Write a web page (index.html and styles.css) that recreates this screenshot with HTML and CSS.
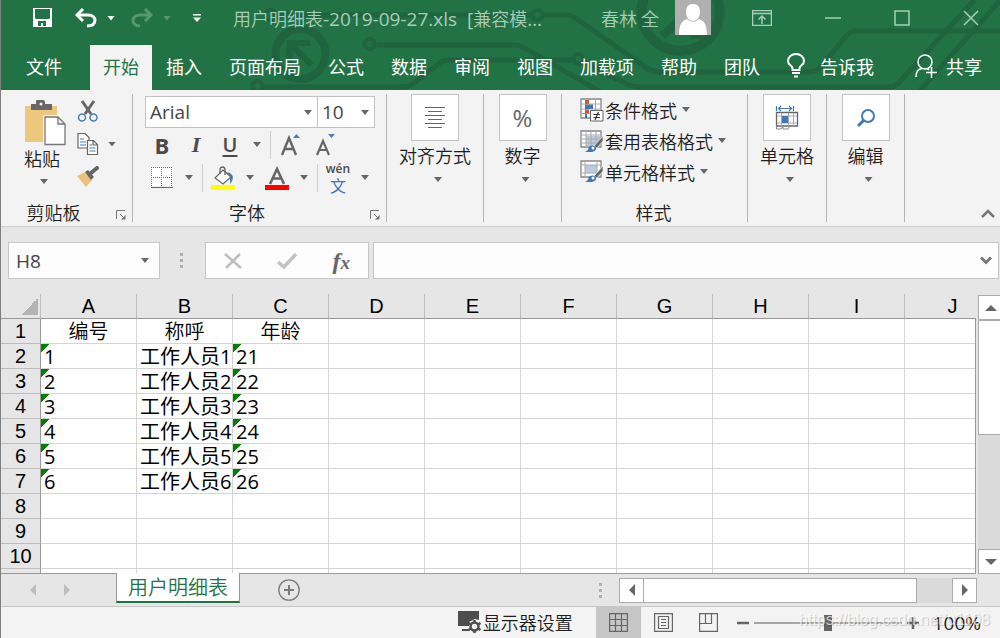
FILE: index.html
```html
<!DOCTYPE html>
<html lang="zh-CN">
<head>
<meta charset="utf-8">
<title>用户明细表-2019-09-27.xls</title>
<link rel="stylesheet" href="styles.css">
</head>
<body>
<div class="app">
  <header class="header">
    <svg class="circuit" viewBox="0 0 1000 90" preserveAspectRatio="xMidYMin slice" fill="none" stroke="#20633f" stroke-width="5" aria-hidden="true">
      <circle cx="300" cy="54" r="25" stroke-width="8"/>
      <path d="M310 43H289V63M290 44L311 65" stroke-width="6"/>
      <circle cx="270" cy="15" r="5" stroke-width="4"/>
      <path d="M276 15H531M544 15H567Q571 15 575 18L642 65Q650 72 660 72H810Q816 72 820 67L846 36Q850 31 856 31H1000"/>
      <circle cx="537" cy="15" r="5" stroke-width="4"/>
      <circle cx="369" cy="44" r="5" stroke-width="4"/>
      <path d="M376 45H514Q519 45 524 48L600 92"/>
      <circle cx="257" cy="86" r="5" stroke-width="4"/>
      <path d="M264 87H402Q408 87 412 84L438 64Q442 60 448 60H571"/>
      <circle cx="578" cy="59" r="5" stroke-width="4"/>
      <path d="M583 62L622 82Q630 87 640 87H888Q894 87 898 83L974 0M918 92L1002 -2"/>
      <circle cx="680" cy="12" r="39" stroke-width="10"/>
      <path d="M662 36L694 6M690 35H702" stroke-width="8"/>
    </svg>
    <div class="titlebar">
      <div class="quick">
        <button class="plain save" aria-label="保存"><svg width="20" height="20" viewBox="0 0 20 20"><path d="M0 0H19V19H0ZM2 1V10L3 11H16L17 10V1ZM5 13V18H8V15H10V18H13V13Z" fill="#fff" fill-rule="evenodd"/></svg></button>
        <div class="pair">
          <button class="plain" aria-label="撤消"><svg width="22" height="20" viewBox="0 0 22 20" fill="none" stroke="#fff" stroke-width="3"><path d="M8 1L2 7L8 13" /><path d="M2 7H13C18 7 20 10 20 12C20 16 17 18 12 18"/></svg></button>
          <button class="plain" aria-label="撤消选项"><i class="caret white"></i></button>
        </div>
        <div class="pair dim">
          <button class="plain" aria-label="恢复"><svg width="22" height="20" viewBox="0 0 22 20" fill="none" stroke="#fff" stroke-width="3"><path d="M14 1L20 7L14 13" /><path d="M20 7H9C4 7 2 10 2 12C2 16 5 18 9 18"/></svg></button>
          <button class="plain" aria-label="恢复选项"><i class="caret white"></i></button>
        </div>
        <button class="plain custom" aria-label="自定义"><svg width="8" height="8" viewBox="0 0 8 8" fill="#fff"><path d="M0 0H8V1.500H0ZM0 3.500H8L4 8Z"/></svg></button>
      </div>
      <h1 class="title">用户明细表<span class="latin">-2019-09-27.xls&nbsp; [</span>兼容模<span class="latin">...</span></h1>
      <span class="user">春林 全</span>
      <svg class="avatar" width="36" height="35" viewBox="0 0 36 35"><path d="M0 0H36V35H0Z" fill="#b0b0b0"/><path d="M18 4C23 4 25 7 25 12C25 17 22 21 18 21C14 21 11 17 11 12C11 7 13 4 18 4ZM4 35C4 26 6 21 12 19Q18 25 24 19C30 21 32 26 32 35Z" fill="#fff"/></svg>
      <div class="window">
        <button class="plain" aria-label="功能区显示选项"><svg width="20" height="16" viewBox="0 0 20 16" fill="none" stroke="#a9cdb8"><path d="M.5.5H19.500V15.500H.5ZM0 3.500H20" stroke-width="1.500"/><path d="M10 14V6M6.500 9.500L10 6L13.500 9.500" stroke-width="1.500"/></svg></button>
        <button class="plain" aria-label="最小化"><svg width="16" height="16" viewBox="0 0 16 16"><path d="M0 8H16" stroke="#a9cdb8" stroke-width="1.500"/></svg></button>
        <button class="plain" aria-label="最大化"><svg width="16" height="16" viewBox="0 0 16 16"><path d="M1 1H15V15H1Z" fill="none" stroke="#a9cdb8" stroke-width="1.500"/></svg></button>
        <button class="plain" aria-label="关闭"><svg width="16" height="16" viewBox="0 0 16 16"><path d="M1 1L15 15M15 1L1 15" stroke="#a9cdb8" stroke-width="1.500"/></svg></button>
      </div>
    </div>
    <nav class="tabs">
      <button class="tab file">文件</button>
      <button class="tab active">开始</button>
      <button class="tab">插入</button>
      <button class="tab">页面布局</button>
      <button class="tab">公式</button>
      <button class="tab">数据</button>
      <button class="tab">审阅</button>
      <button class="tab">视图</button>
      <button class="tab">加载项</button>
      <button class="tab">帮助</button>
      <button class="tab">团队</button>
      <button class="tab tell"><svg width="18" height="25" viewBox="0 0 18 25" fill="none" stroke="#fff" stroke-width="2"><path d="M5.500 17V15C5 12 1 12 1 8C1 4 4.500 1 9 1S17 4 17 8C17 12 13 12 12.500 15V17ZM5 20H13M7 23.500H11"/></svg>告诉我</button>
      <button class="tab share"><svg width="22" height="24" viewBox="0 0 22 24" fill="none" stroke="#fff" stroke-width="1.500"><circle cx="10" cy="8" r="7"/><path d="M1 23C1 18 3 15 7 14.500M12 14.500L14 16M16.500 13V24M11 18.500H22"/></svg>共享</button>
    </nav>
  </header>

  <section class="ribbon" aria-label="开始">
    <div class="group clipboard">
      <div class="clip-body">
        <button class="plain paste">
          <svg width="42" height="46" viewBox="0 0 42 46"><path d="M1 6H33V42H1Z" fill="#eec77e"/><path d="M7 10V4H12V1Q12 0 13 0H19Q21 0 21 2V4H28V10Z" fill="#686868"/><circle cx="17" cy="4" r="1.500" fill="#f3f3f3"/><path d="M19 15H36L43 22V46H19Z" fill="#f3f3f3"/><path d="M21 17H34L41 24V44.500H21ZM34 17V24H41" fill="#fff" stroke="#777" stroke-width="1.300"/></svg>
          <span>粘贴</span><i class="caret"></i>
        </button>
        <div class="clip-tools">
          <button class="plain" aria-label="剪切"><svg width="22" height="22" viewBox="0 0 22 22" fill="none"><path d="M5 1L14 14M17 1L8 14" stroke="#666" stroke-width="3"/><circle cx="5" cy="17.500" r="3.500" stroke="#4a7fb5" stroke-width="1.500"/><circle cx="16.500" cy="17.500" r="3.500" stroke="#4a7fb5" stroke-width="1.500"/></svg></button>
          <div class="copy"><button class="plain" aria-label="复制"><svg width="22" height="22" viewBox="0 0 22 22" fill="#fff" stroke="#666" stroke-width="1.200"><path d="M1 .5H8L12 4.500V15H1Z"/><path d="M3 6H7M3 9H9M3 12H9" stroke="#4a7fb5"/><path d="M10.500 7.500H16.500L20.500 11.500V21.500H10.500ZM16 7.500V12H20.500"/><path d="M12.500 12H15M12.500 15H18.500M12.500 18H18.500" stroke="#4a7fb5"/></svg></button><button class="plain" aria-label="复制选项"><i class="caret"></i></button></div>
          <button class="plain" aria-label="格式刷"><svg width="22" height="21" viewBox="0 0 22 21"><path d="M0 10L8 6L15 14L9 21Z" fill="#eec17b"/><path d="M8 6L11 4L17 11L14 14Z" fill="#666"/><path d="M14 7L20 2" stroke="#666" stroke-width="4" stroke-linecap="round"/></svg></button>
        </div>
      </div>
      <div class="caption"><span>剪贴板</span><button class="plain launcher" aria-label="剪贴板设置"><svg width="10" height="10" viewBox="0 0 10 10" fill="none" stroke="#777"><path d="M.5 9V.5H9M4 4L8 8"/><path d="M9.500 5V9.500H5Z" fill="#777" stroke="none"/></svg></button></div>
    </div>

    <div class="group font">
      <div class="combos">
        <span class="combo family"><select aria-label="字体"><option>Arial</option></select><i class="caret"></i></span>
        <span class="combo size"><select aria-label="字号"><option>10</option></select><i class="caret"></i></span>
      </div>
      <div class="tools">
        <button class="tool bold">B</button><button class="tool italic">I</button><button class="tool under">U</button><button class="tool drop" aria-label="下划线选项"><i class="caret"></i></button>
        <i class="bar"></i>
        <button class="tool" aria-label="增大字号"><svg width="22" height="24" viewBox="0 0 22 24"><path d="M2 22L9 5L16 22M5 16H13" fill="none" stroke="#666" stroke-width="2.400"/><path d="M13 5H20L16.500 1Z" fill="#4a7fb5"/></svg></button>
        <button class="tool" aria-label="减小字号"><svg width="22" height="24" viewBox="0 0 22 24"><path d="M3 22L9 8L15 22M5 17H13" fill="none" stroke="#666" stroke-width="2.200"/><path d="M14 1H21L17.500 5Z" fill="#4a7fb5"/></svg></button>
      </div>
      <div class="tools">
        <button class="tool" aria-label="边框"><svg width="22" height="22" viewBox="0 0 22 22" fill="none" stroke="#666"><path d="M0 0H22V22H0Z" fill="#fff" stroke="none"/><path d="M0 .5H21M0 10.500H21M.5 0V21M10.500 0V21M20.500 0V21" stroke-dasharray="1 1" shape-rendering="crispEdges"/><path d="M0 20.500H22" stroke-width="1.200"/></svg></button><button class="tool drop" aria-label="边框选项"><i class="caret"></i></button>
        <i class="bar"></i>
        <button class="tool" aria-label="填充颜色"><svg width="24" height="24" viewBox="0 0 24 24"><path d="M0 19H24V24H0Z" fill="#ff0"/><path d="M16 6Q21 7 22 11Q22 15 19 18V11Z" fill="#4a7fb5"/><path d="M12 4L20 11L12 18L4 12Z" fill="#fff" stroke="#666" stroke-width="1.200"/><path d="M9 8V4Q9 1 11.500 1T14 4V9" fill="none" stroke="#666" stroke-width="1.300"/></svg></button><button class="tool drop" aria-label="填充颜色选项"><i class="caret"></i></button>
        <button class="tool" aria-label="字体颜色"><svg width="24" height="24" viewBox="0 0 24 24"><path d="M0 19H24V24H0Z" fill="red"/><path d="M5 18L12 3L19 18M8 12.500H16" fill="none" stroke="#666" stroke-width="2.600"/></svg></button><button class="tool drop" aria-label="字体颜色选项"><i class="caret"></i></button>
        <i class="bar"></i>
        <button class="tool phonetic"><span>wén</span><b>文</b></button><button class="tool drop" aria-label="拼音选项"><i class="caret"></i></button>
      </div>
      <div class="caption"><span>字体</span><button class="plain launcher" aria-label="字体设置"><svg width="10" height="10" viewBox="0 0 10 10" fill="none" stroke="#777"><path d="M.5 9V.5H9M4 4L8 8"/><path d="M9.500 5V9.500H5Z" fill="#777" stroke="none"/></svg></button></div>
    </div>

    <div class="group align"><button class="plain big"><span class="tile"><svg width="20" height="22" viewBox="0 0 20 22" stroke="#666" shape-rendering="crispEdges"><path d="M0 .5H20M3 4.500H17M0 8.500H20M3 12.500H17M0 16.500H20M3 20.500H17"/></svg></span>对齐方式<i class="caret"></i></button></div>
    <div class="group number"><button class="plain big"><span class="tile percent">%</span>数字<i class="caret"></i></button></div>

    <div class="group styles">
      <button class="plain line"><svg width="24" height="24" viewBox="0 0 24 24"><path d="M1 1H21V20H1Z" fill="#fff" stroke="#888" stroke-width="1.300"/><path d="M5.500 1V20M15.500 1V20M1 6H21M1 11H21M1 15.500H21" stroke="#aaa"/><path d="M5 2H9V6H5ZM5 11.500H9V15.500H5Z" fill="#d9532c"/><path d="M5 6.500H13V11H5ZM5 16H7V20H5Z" fill="#3f78b4"/><path d="M10.500 12.500H23V23H10.500Z" fill="#fff" stroke="#666"/><path d="M13.500 16.500H20M13.500 19.500H20M18.500 14L15 22" stroke="#333" stroke-width="1.200"/></svg>条件格式<i class="caret"></i></button>
      <button class="plain line"><svg width="24" height="24" viewBox="0 0 24 24"><path d="M1 2H21V18H1Z" fill="#fff" stroke="#888" stroke-width="1.300"/><path d="M6 7H20V17H6Z" fill="#b9cbe0"/><path d="M6 2V18M11 2V18M16 2V18M1 6H21M1 10H21M1 14H21" stroke="#aaa"/><path d="M14 17L23 7V12L17 19Z" fill="#666" stroke="#f3f3f3" stroke-width=".7"/><path d="M5 23Q8 22 9 18Q12 15 16 18Q17 22 12 23Z" fill="#3f78b4"/><circle cx="13" cy="19" r="1.500" fill="#fff"/></svg>套用表格格式<i class="caret"></i></button>
      <button class="plain line"><svg width="24" height="24" viewBox="0 0 24 24"><path d="M1 1H21V17H1Z" fill="#fff" stroke="#888" stroke-width="1.300"/><path d="M5 5H17V13H5Z" fill="#b9cbe0"/><path d="M5 1V17M17 1V17M1 5H21M1 13H21" stroke="#aaa"/><path d="M14 16L23 6V11L17 18Z" fill="#666" stroke="#f3f3f3" stroke-width=".7"/><path d="M5 22Q8 21 9 17Q12 14 16 17Q17 21 12 22Z" fill="#3f78b4"/><circle cx="13" cy="18" r="1.500" fill="#fff"/></svg>单元格样式<i class="caret"></i></button>
      <div class="caption"><span>样式</span></div>
    </div>

    <div class="group cells"><button class="plain big"><span class="tile"><svg width="24" height="26" viewBox="0 0 24 26" fill="none"><path d="M1.500 1V6M18.500 1V6M3 3.500H17M6 1L3.500 3.500L6 6M14 1L16.500 3.500L14 6" stroke="#3f78b4" stroke-width="1.200"/><path d="M1.500 7.500H22.500V21H1.500Z" stroke="#666" stroke-width="1.300"/><path d="M6.500 8V21M13.500 8V21M18.500 8V21M2 11H22M2 18H22" stroke="#aaa"/><path d="M7 11H13V18H7Z" fill="#3f78b4"/><path d="M1.500 21V24H6L8 21.500V24H13L15 21" stroke="#888"/></svg></span>单元格<i class="caret"></i></button></div>
    <div class="group edit"><button class="plain big"><span class="tile"><svg width="20" height="20" viewBox="0 0 20 20" fill="none" stroke="#3f78b4"><circle cx="12" cy="8" r="6" stroke-width="2"/><path d="M8 12L2 18" stroke-width="3"/></svg></span>编辑<i class="caret"></i></button></div>
    <button class="plain collapse" aria-label="折叠功能区"><svg width="14" height="9" viewBox="0 0 14 9"><path d="M1 8L7 2L13 8" fill="none" stroke="#777" stroke-width="2.500"/></svg></button>
  </section>

  <section class="formula">
    <div class="box name"><input class="entry" aria-label="名称框" value="H8"><button class="plain" aria-label="名称列表"><i class="caret"></i></button></div>
    <i class="dots"></i>
    <div class="box marks">
      <button class="plain" aria-label="取消"><svg width="18" height="16" viewBox="0 0 18 16"><path d="M1 1L17 15M16 1L2 15" stroke="#bdbdbd" stroke-width="2.500"/></svg></button>
      <button class="plain" aria-label="输入"><svg width="20" height="16" viewBox="0 0 20 16"><path d="M1 9L7 14L19 1" fill="none" stroke="#c3c3c3" stroke-width="3.500"/></svg></button>
      <button class="plain fx"><i>f</i><i class="sub">x</i></button>
    </div>
    <div class="box bar-input"><input class="entry" aria-label="编辑栏"><button class="plain" aria-label="展开编辑栏"><svg width="12" height="9" viewBox="0 0 12 9"><path d="M1 1.500L6 6.500L11 1.500" fill="none" stroke="#777" stroke-width="3"/></svg></button></div>
  </section>

  <main class="sheet">
    <div class="grid">
      <table>
        <colgroup><col class="rowcol"><col><col><col><col><col><col><col><col><col><col></colgroup>
        <thead><tr><th class="corner" aria-label="全选"></th><th>A</th><th>B</th><th>C</th><th>D</th><th>E</th><th>F</th><th>G</th><th>H</th><th>I</th><th>J</th></tr></thead>
        <tbody>
          <tr><th>1</th><td class="mid">编号</td><td class="mid">称呼</td><td class="mid">年龄</td><td></td><td></td><td></td><td></td><td></td><td></td><td></td></tr>
          <tr><th>2</th><td class="flag">1</td><td>工作人员1</td><td class="flag">21</td><td></td><td></td><td></td><td></td><td></td><td></td><td></td></tr>
          <tr><th>3</th><td class="flag">2</td><td>工作人员2</td><td class="flag">22</td><td></td><td></td><td></td><td></td><td></td><td></td><td></td></tr>
          <tr><th>4</th><td class="flag">3</td><td>工作人员3</td><td class="flag">23</td><td></td><td></td><td></td><td></td><td></td><td></td><td></td></tr>
          <tr><th>5</th><td class="flag">4</td><td>工作人员4</td><td class="flag">24</td><td></td><td></td><td></td><td></td><td></td><td></td><td></td></tr>
          <tr><th>6</th><td class="flag">5</td><td>工作人员5</td><td class="flag">25</td><td></td><td></td><td></td><td></td><td></td><td></td><td></td></tr>
          <tr><th>7</th><td class="flag">6</td><td>工作人员6</td><td class="flag">26</td><td></td><td></td><td></td><td></td><td></td><td></td><td></td></tr>
          <tr><th>8</th><td></td><td></td><td></td><td></td><td></td><td></td><td></td><td></td><td></td><td></td></tr>
          <tr><th>9</th><td></td><td></td><td></td><td></td><td></td><td></td><td></td><td></td><td></td><td></td></tr>
          <tr><th>10</th><td></td><td></td><td></td><td></td><td></td><td></td><td></td><td></td><td></td><td></td></tr>
          <tr><th></th><td></td><td></td><td></td><td></td><td></td><td></td><td></td><td></td><td></td><td></td></tr>
        </tbody>
      </table>
    </div>
    <div class="vscroll">
      <button class="scroll-btn" aria-label="向上滚动"><svg width="12" height="6" viewBox="0 0 12 6"><path d="M0 6L6 0L12 6Z" fill="#666"/></svg></button>
      <div class="track"><div class="thumb"></div></div>
      <button class="scroll-btn" aria-label="向下滚动"><svg width="12" height="6" viewBox="0 0 12 6"><path d="M0 0L6 6L12 0Z" fill="#666"/></svg></button>
    </div>
  </main>

  <div class="sheetbar">
    <div class="sheetnav">
      <button class="plain" aria-label="上一张"><svg width="6" height="12" viewBox="0 0 6 12"><path d="M6 0V12L0 6Z" fill="#bdbdbd"/></svg></button>
      <button class="plain" aria-label="下一张"><svg width="6" height="12" viewBox="0 0 6 12"><path d="M0 0V12L6 6Z" fill="#bdbdbd"/></svg></button>
    </div>
    <button class="sheettab">用户明细表</button>
    <button class="plain add" aria-label="新工作表"><svg width="22" height="22" viewBox="0 0 22 22" fill="none" stroke="#7b7b7b"><circle cx="11" cy="11" r="10.200" stroke-width="1.300"/><path d="M6 11H16M11 6V16" stroke-width="2"/></svg></button>
    <i class="dots"></i>
    <div class="hscroll">
      <button class="scroll-btn" aria-label="向左滚动"><svg width="6" height="12" viewBox="0 0 6 12"><path d="M6 0V12L0 6Z" fill="#666"/></svg></button>
      <div class="track"><div class="thumb"></div></div>
      <button class="scroll-btn" aria-label="向右滚动"><svg width="6" height="12" viewBox="0 0 6 12"><path d="M0 0V12L6 6Z" fill="#666"/></svg></button>
    </div>
  </div>

  <footer class="status">
    <button class="plain display"><svg width="24" height="22" viewBox="0 0 24 22"><path d="M0 0H21V9L17 8L11 11V15H0ZM4 18H11V20H4Z" fill="#4d4d4d"/><circle cx="16.500" cy="15.500" r="4" fill="none" stroke="#4d4d4d" stroke-width="2.500"/><path d="M16.500 9V12M16.500 19V22M10.500 12L13 13.500M20 17.500L22.500 19M10.500 19L13 17.500M20 13.500L22.500 12" stroke="#4d4d4d" stroke-width="2.500"/></svg>显示器设置</button>
    <div class="views">
      <button class="view on" aria-label="普通"><svg width="19" height="19" viewBox="0 0 19 19" fill="none" stroke="#666" stroke-width="1.200"><path d="M.6.6H18.400V18.400H.6ZM6.500 0V19M12.500 0V19M0 6.500H19M0 12.500H19"/></svg></button>
      <button class="view" aria-label="页面布局"><svg width="19" height="19" viewBox="0 0 19 19" fill="none" stroke="#666" stroke-width="1.200"><path d="M.6.6H18.400V18.400H.6ZM4.500 3.500H14.500V15.500H4.500ZM7 6.500H12M7 9.500H12M7 12.500H12"/></svg></button>
      <button class="view" aria-label="分页预览"><svg width="19" height="19" viewBox="0 0 19 19" fill="none" stroke="#666" stroke-width="1.200"><path d="M.6.6H18.400V18.400H.6ZM0 10.500H12.500V0M6.500 0V10.500"/></svg></button>
    </div>
    <div class="zoom">
      <button class="plain" aria-label="缩小"><svg width="12" height="12" viewBox="0 0 12 12"><path d="M0 6H12" stroke="#666" stroke-width="2.500"/></svg></button>
      <input type="range" class="slider" aria-label="缩放" min="0" max="100" value="50">
      <button class="plain" aria-label="放大"><svg width="12" height="12" viewBox="0 0 12 12"><path d="M0 6H12M6 0V12" stroke="#666" stroke-width="2.500"/></svg></button>
      <span class="latin">100%</span>
    </div>
    <span class="watermark">https://blog.csdn.net/u1108</span>
  </footer>
</div>
</body>
</html>
```

FILE: styles.css
```css
* { box-sizing: border-box; }
body {
  margin: 0;
  font: 350 18px/24px "Noto Sans CJK SC", sans-serif;
  color: #1e1e1e;
}
button, input, select { font: inherit; color: inherit; margin: 0; }
svg { display: block; flex: none; }
.app {
  display: flex;
  flex-direction: column;
  height: 100vh;
  overflow: hidden;
  border-left: 1px solid #7f7f7f;
  background: #e6e6e6;
}
.plain {
  display: flex;
  align-items: center;
  padding: 0;
  border: 0;
  background: none;
  white-space: nowrap;
}
.latin { font-family: "Open Sans", sans-serif; font-size: 19px; font-weight: 400; }
.caret {
  flex: none;
  width: 8px;
  height: 5px;
  background: #666;
  clip-path: polygon(0 0, 100% 0, 50% 100%);
}
.caret.white { background: #fff; }

/* Header */
.header { position: relative; flex: none; background: #217346; color: #fff; }
.circuit { position: absolute; inset: 0; width: 100%; height: 100%; }
.titlebar { position: relative; display: flex; align-items: center; height: 36px; padding: 0 21px 0 32px; }
.quick { display: flex; align-items: center; gap: 16px; }
.pair { display: flex; align-items: center; gap: 10px; }
.dim { opacity: .25; }
.save { margin-right: 6px; }
.custom { margin-left: 6px; }
.title {
  flex: 1;
  margin: 0 0 0 32px;
  font-size: 18px;
  font-weight: 350;
  line-height: 24px;
  color: #a9cdb8;
  white-space: nowrap;
}
.user { color: #a9cdb8; margin-right: 16px; }
.avatar { align-self: flex-start; margin-right: 41px; }
.window { display: flex; align-items: center; gap: 53px; }
.tabs { position: relative; display: flex; gap: 1px; height: 54px; padding-top: 9px; }
.tab {
  display: flex;
  align-items: center;
  padding: 0 13px 4px;
  border: 0;
  background: none;
  white-space: nowrap;
  font-weight: 400;
}
.tab.file { padding: 0 27px 4px 25px; }
.tab.active { background: #f3f3f3; color: #217346; }
.tab.tell { gap: 15px; }
.tab.share { gap: 9px; margin-left: auto; padding-right: 18px; }

/* Ribbon */
.ribbon {
  display: flex;
  flex: none;
  padding: 4px 0;
  border-bottom: 1px solid #d0d0d0;
  background: #f3f3f3;
}
.group {
  display: flex;
  flex-direction: column;
  flex: none;
  height: 128px;
  border-right: 1px solid #b4b4b4;
}
.clipboard { width: 132px; }
.font { width: 254px; padding: 2px 11px 0 12px; }
.align { width: 97px; }
.number { width: 78px; }
.styles { width: 186px; padding: 0 0 0 18px; }
.cells { width: 79px; }
.edit { width: 78px; }
.caption { display: flex; align-items: center; justify-content: center; position: relative; margin-top: auto; height: 20px; }
.launcher { position: absolute; right: 6px; bottom: 2px; }
.font .caption { padding-right: 26px; }
.font .launcher { right: -5px; }
.clipboard .caption { padding-right: 26px; }
.clip-body { display: flex; padding: 6px 0 0 23px; gap: 11px; }
.paste { flex-direction: column; width: 42px; align-items: flex-start; }
.paste .caret { margin: 9px 0 0 16px; }
.clip-tools { display: flex; flex-direction: column; gap: 11px; }
.copy { display: flex; gap: 9px; }
.combos { display: flex; }
.combo { position: relative; display: flex; height: 32px; border: 1px solid #c3c3c3; background: #fff; }
.combo select {
  width: 100%;
  padding: 0 4px;
  border: 0;
  background: none;
  appearance: none;
  color: #444;
  font: 400 19px/28px "Open Sans", sans-serif;
}
.combo .caret { position: absolute; right: 5px; top: 13px; pointer-events: none; }
.family { flex: 1; margin-right: -1px; }
.size { flex: 0 0 58px; }
.tools { display: flex; align-items: center; height: 33px; }
.tool {
  display: flex;
  align-items: center;
  justify-content: center;
  width: 34px;
  height: 32px;
  padding: 0;
  border: 0;
  background: none;
  flex: none;
  color: #4a4a4a;
}
.tool.drop { width: 20px; }
.bar { width: 1px; height: 28px; margin: 0 3px; background: #d0d0d0; flex: none; }
.bold { font: 700 22px/24px "Open Sans", sans-serif; }
.italic { font: italic 700 22px/24px "Liberation Serif", serif; }
.under { font: 600 20px/24px "Open Sans", sans-serif; text-decoration: underline; text-decoration-thickness: 2px; text-underline-offset: 3px; }
.phonetic { flex-direction: column; font: 600 12px/14px "Open Sans", sans-serif; }
.phonetic b { font: 400 16px/18px "Noto Sans CJK SC", sans-serif; color: #3f78b4; }
.big { flex-direction: column; }
.big .caret { margin: 10px 0 0 6px; }
.tile {
  display: flex;
  align-items: center;
  justify-content: center;
  width: 48px;
  height: 47px;
  margin-bottom: 2px;
  border: 1px solid #c3c3c3;
  background: #fff;
}
.percent { font: 400 24px/24px "Open Sans", sans-serif; color: #666; }
.line { height: 31px; gap: 1px; }
.line .caret { margin-left: 4px; }
.styles .caption { padding-right: 20px; }
.collapse { align-self: flex-end; margin: 0 5px 4px auto; }

/* Formula bar */
.formula { display: flex; flex: none; align-items: center; padding: 15px 1px 15px 7px; }
.box { display: flex; align-items: center; height: 37px; border: 1px solid #c6c6c6; background: #fdfdfd; }
.entry {
  flex: 1;
  min-width: 0;
  padding: 0 7px;
  border: 0;
  background: none;
  color: #444;
  font: 400 19px/28px "Open Sans", sans-serif;
}
.name { width: 152px; padding-right: 10px; }
.marks { width: 164px; padding: 0 18px; justify-content: space-between; }
.bar-input { flex: 1; margin-left: 4px; padding-right: 6px; }
.dots { flex: none; width: 3px; height: 15px; background: repeating-linear-gradient(#b0b0b0 0 3px, transparent 3px 6px); }
.formula .dots { margin: 0 22px 0 20px; }
.fx { font: italic 700 24px/28px "Liberation Serif", serif; color: #666; }
.fx .sub { font-size: 19px; padding-top: 4px; }

/* Worksheet */
.sheet { display: flex; flex: 1; min-height: 0; }
.grid {
  flex: 1;
  min-width: 0;
  overflow: hidden;
  border: 0 solid #999;
  border-width: 0 1px 1px 0;
  border-image: linear-gradient(#e6e6e6 25px, #999 25px) 1;
  background: #fff;
}
table { width: 1000px; border-spacing: 0; table-layout: fixed; }
col { width: 96px; }
.rowcol { width: 40px; }
th, td { height: 25px; padding: 0; white-space: nowrap; }
th { background: #e6e6e6; color: #000; font: 400 20px/24px "Liberation Sans", sans-serif; }
thead th { border-right: 1px solid #bdbdbd; border-bottom: 1px solid #999; }
tbody th { border-right: 1px solid #999; border-bottom: 1px solid #bdbdbd; }
td {
  padding: 1px 0 0 3px;
  border-right: 1px solid #d4d4d4;
  border-bottom: 1px solid #d4d4d4;
  color: #000;
  font: 400 20px/23px "Open Sans", "Noto Sans CJK SC", sans-serif;
}
.mid { text-align: center; padding: 1px 0 0; font-weight: 350; }
.flag { background: linear-gradient(135deg, #008000 6px, transparent 6px); }
.corner { background: linear-gradient(135deg, #e6e6e6 50%, #b4b4b4 50%) 20px 4px / 17px 17px no-repeat #e6e6e6; }
.vscroll { display: flex; flex-direction: column; width: 22px; margin: 1px 0 0 2px; overflow: hidden; }
.scroll-btn {
  display: flex;
  flex: none;
  align-items: center;
  justify-content: center;
  width: 25px;
  height: 25px;
  padding: 0;
  border: 1px solid #ababab;
  background: #fff;
}
.track { flex: 1; background: #dadada; }
.thumb { border: 1px solid #ababab; background: #fff; }
.vscroll .thumb { height: 50%; width: 25px; }

/* Sheet tabs */
.sheetbar { display: flex; flex: none; align-items: center; height: 32px; padding-right: 23px; }
.sheetnav { display: flex; gap: 28px; width: 115px; padding-left: 29px; }
.sheettab {
  position: relative;
  align-self: flex-start;
  height: 30px;
  margin-top: -1px;
  padding: 0 11px;
  border: 1px solid #999;
  border-width: 0 1px 2px;
  border-bottom-color: #217346;
  background: #fff;
  color: #217346;
  font-size: 20px;
  line-height: 24px;
}
.add { margin: 0 auto 0 38px; }
.hscroll { display: flex; width: 358px; margin-left: 17px; }
.hscroll .track { display: flex; }
.hscroll .thumb { width: 89%; margin-left: -1px; }

/* Status bar */
.status {
  position: relative;
  display: flex;
  flex: none;
  align-items: stretch;
  justify-content: flex-end;
  height: 32px;
  padding-right: 19px;
  border-top: 1px solid #c6c6c6;
  background: #f3f3f3;
}
.display { gap: 1px; margin-right: 23px; padding-bottom: 2px; }
.views { display: flex; }
.view { display: flex; align-items: center; justify-content: center; width: 45px; padding: 0; border: 0; background: none; }
.view.on { background: #c6c6c6; }
.zoom { display: flex; align-items: center; margin-left: 6px; }
.slider { width: 148px; height: 16px; margin: 0 5px; appearance: none; background: linear-gradient(#a6a6a6, #a6a6a6) center / 100% 2px no-repeat; }
.slider::-webkit-slider-thumb { appearance: none; width: 8px; height: 16px; background: #666; }
.zoom .latin { margin-left: 14px; }
.watermark {
  position: absolute;
  right: 10px;
  top: 3px;
  color: rgba(255, 255, 255, .7);
  text-shadow: 1px 1px 1px rgba(0, 0, 0, .2);
  font: 400 16px/20px "Liberation Sans", sans-serif;
  pointer-events: none;
}
```
